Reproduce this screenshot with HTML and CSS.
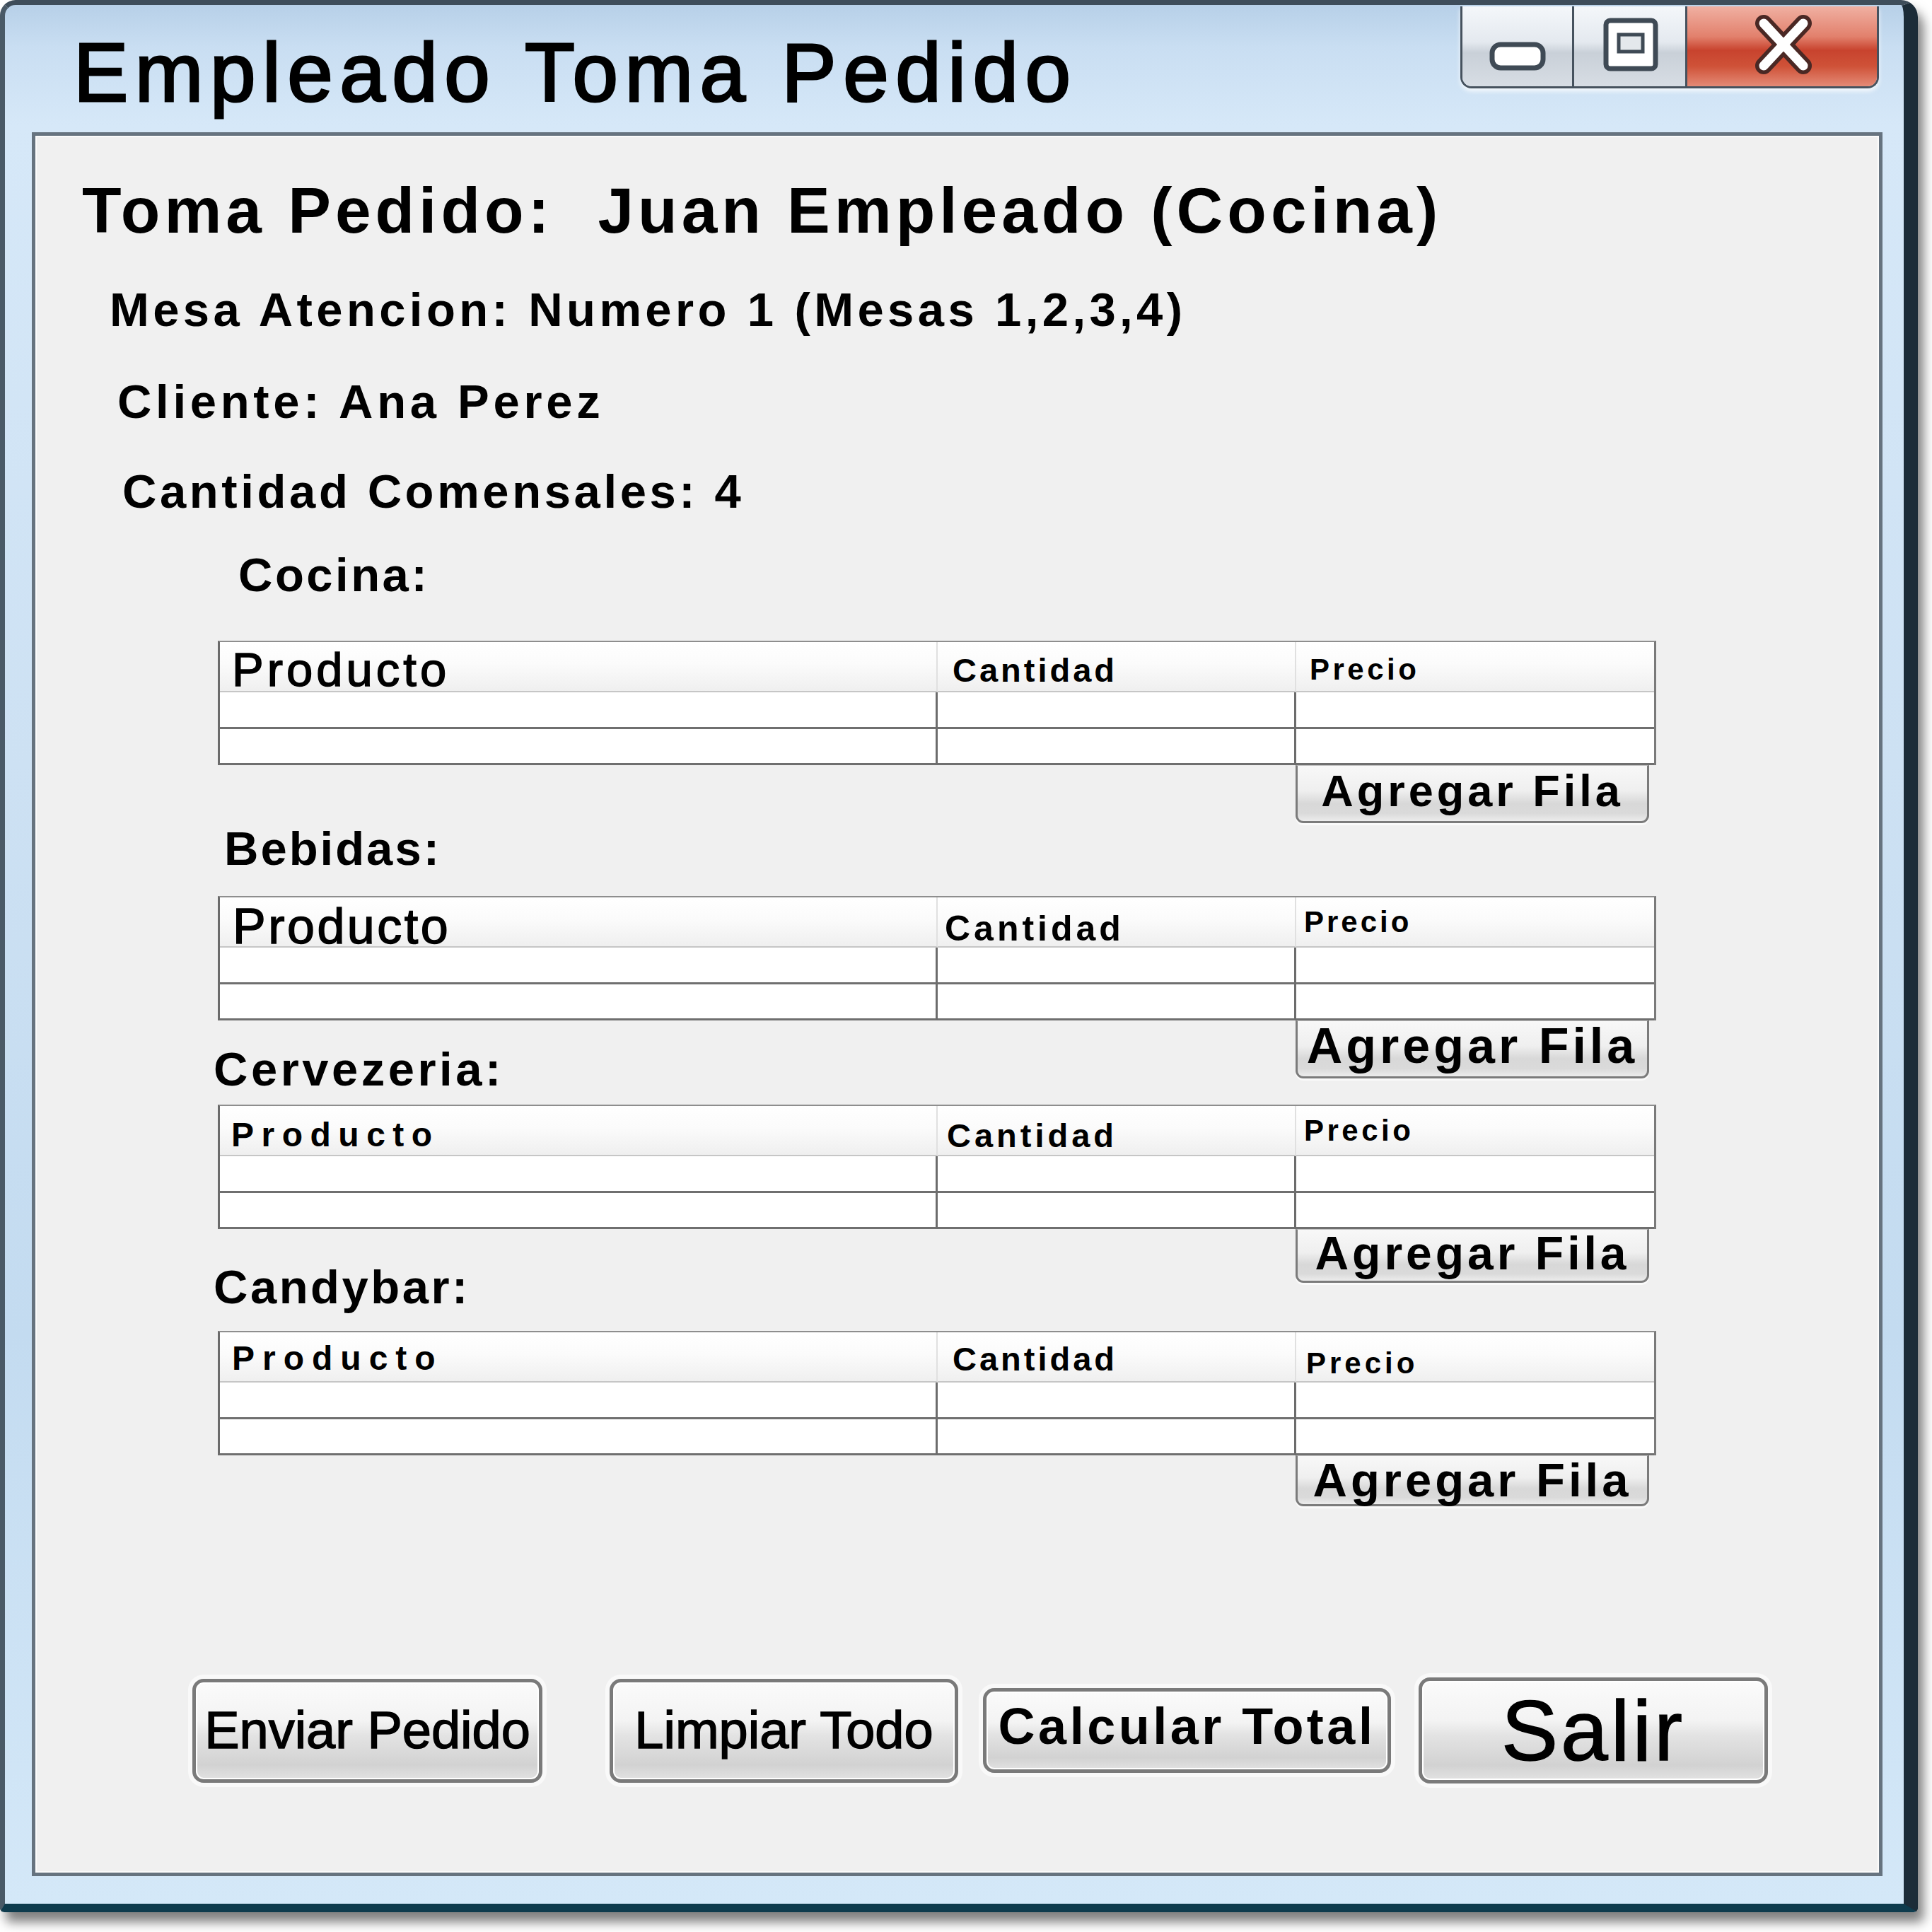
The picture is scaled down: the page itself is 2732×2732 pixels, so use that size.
FILE: index.html
```html
<!DOCTYPE html>
<html lang="es">
<head>
<meta charset="utf-8">
<title>Empleado Toma Pedido</title>
<link rel="stylesheet" href="styles.css">
</head>
<body>
<div class="window">
  <header class="titlebar">
    <div class="title">Empleado Toma Pedido</div>
    <div class="caption">
      <div class="cap cap-min">
        <svg width="155" height="113" viewBox="0 0 155 113"><rect x="42" y="54" width="72" height="33" rx="12" fill="#ffffff" stroke="#3f4a55" stroke-width="7"/></svg>
      </div>
      <div class="cap cap-max">
        <svg width="157" height="113" viewBox="0 0 157 113"><rect x="45" y="20" width="70" height="68" rx="6" fill="#ffffff" stroke="#3f4a55" stroke-width="7"/><rect x="63" y="40" width="34" height="24" fill="#e4e8ec" stroke="#3f4a55" stroke-width="5"/></svg>
      </div>
      <div class="cap cap-close">
        <svg width="268" height="113" viewBox="0 0 268 113"><path d="M108 24 L164 84 M164 24 L108 84" stroke="#4a2824" stroke-width="24" stroke-linecap="round" fill="none"/><path d="M108 24 L164 84 M164 24 L108 84" stroke="#ffffff" stroke-width="13" stroke-linecap="round" fill="none"/></svg>
      </div>
    </div>
  </header>
  <main class="client">
    <h1 class="heading">Toma Pedido:&nbsp; Juan Empleado (Cocina)</h1>
    <p class="info mesa">Mesa Atencion: Numero 1 (Mesas 1,2,3,4)</p>
    <p class="info cliente">Cliente: Ana Perez</p>
    <p class="info comensales">Cantidad Comensales: 4</p>

    <h2 class="label l-cocina">Cocina:</h2>
    <div class="grid g1">
      <div class="hc hc1"><span class="ht h1p">Producto</span></div>
      <div class="hc hc2"><span class="ht h1c">Cantidad</span></div>
      <div class="hc hc3"><span class="ht h1r">Precio</span></div>
      <div class="bc bc1"></div><div class="bc bc2"></div><div class="bc bc3"></div>
      <div class="bc bc1"></div><div class="bc bc2"></div><div class="bc bc3"></div>
    </div>
    <div class="addrow af1">Agregar Fila</div>

    <h2 class="label l-bebidas">Bebidas:</h2>
    <div class="grid g2">
      <div class="hc hc1"><span class="ht h2p">Producto</span></div>
      <div class="hc hc2"><span class="ht h2c">Cantidad</span></div>
      <div class="hc hc3"><span class="ht h2r">Precio</span></div>
      <div class="bc bc1"></div><div class="bc bc2"></div><div class="bc bc3"></div>
      <div class="bc bc1"></div><div class="bc bc2"></div><div class="bc bc3"></div>
    </div>
    <div class="addrow af2">Agregar Fila</div>

    <h2 class="label l-cerveza">Cervezeria:</h2>
    <div class="grid g3">
      <div class="hc hc1"><span class="ht h3p">Producto</span></div>
      <div class="hc hc2"><span class="ht h3c">Cantidad</span></div>
      <div class="hc hc3"><span class="ht h3r">Precio</span></div>
      <div class="bc bc1"></div><div class="bc bc2"></div><div class="bc bc3"></div>
      <div class="bc bc1"></div><div class="bc bc2"></div><div class="bc bc3"></div>
    </div>
    <div class="addrow af3">Agregar Fila</div>

    <h2 class="label l-candy">Candybar:</h2>
    <div class="grid g4">
      <div class="hc hc1"><span class="ht h4p">Producto</span></div>
      <div class="hc hc2"><span class="ht h4c">Cantidad</span></div>
      <div class="hc hc3"><span class="ht h4r">Precio</span></div>
      <div class="bc bc1"></div><div class="bc bc2"></div><div class="bc bc3"></div>
      <div class="bc bc1"></div><div class="bc bc2"></div><div class="bc bc3"></div>
    </div>
    <div class="addrow af4">Agregar Fila</div>

    <div class="actions">
      <button class="btn b-enviar">Enviar Pedido</button>
      <button class="btn b-limpiar">Limpiar Todo</button>
      <button class="btn b-calcular">Calcular Total</button>
      <button class="btn b-salir">Salir</button>
    </div>
  </main>
</div>
</body>
</html>
```
FILE: styles.css
```css
html, body {
  margin: 0;
  padding: 0;
  background: #ffffff;
}
body {
  font-family: "Liberation Sans", Arial, sans-serif;
  color: #000;
  width: 2732px;
  height: 2732px;
  overflow: hidden;
}

.window {
  width: 2712px;
  height: 2704px;
  box-sizing: border-box;
  border-style: solid;
  border-width: 7px 20px 12px 7px;
  border-color: #3e4d5a #1c2c38 #0e3b4d #4a5a67;
  border-radius: 22px 24px 6px 6px;
  background: linear-gradient(180deg, #b7d0e8 0, #c9def2 60px, #d6e8f8 170px, #cde1f3 40%, #c3dbf0 70%, #d4e8f8 100%);
  padding: 0 30px 39px 38px;
  display: flex;
  flex-direction: column;
  box-shadow: 8px 14px 16px rgba(0, 0, 0, 0.5);
}

.titlebar {
  height: 180px;
  flex: none;
  display: flex;
  align-items: flex-start;
}
.title {
  margin: 38px 0 0 59px;
  font-size: 116px;
  line-height: 116px;
  letter-spacing: 9.5px;
  -webkit-text-stroke: 3px #000;
  white-space: nowrap;
}

.caption {
  margin: 2px 5px 0 auto;
  width: 592px;
  height: 116px;
  box-sizing: border-box;
  border: 3px solid #46525e;
  border-top: 0;
  border-radius: 0 0 16px 16px;
  overflow: hidden;
  display: flex;
  box-shadow: 0 4px 6px rgba(255, 255, 255, 0.8);
}
.cap {
  height: 100%;
  box-sizing: border-box;
}
.cap svg {
  display: block;
}
.cap-min {
  width: 158px;
  border-right: 3px solid #46525e;
  background: linear-gradient(180deg, #f4f7fa 0, #e4e9ef 45%, #c9d0d8 58%, #d7dde4 100%);
}
.cap-max {
  width: 160px;
  border-right: 3px solid #46525e;
  background: linear-gradient(180deg, #f4f7fa 0, #e4e9ef 45%, #c9d0d8 58%, #d7dde4 100%);
}
.cap-close {
  flex: 1;
  background: linear-gradient(180deg, #f0b0a2 0, #e2806c 38%, #c8432e 55%, #cf5238 75%, #e48a76 100%);
}

.client {
  flex: 1;
  box-sizing: border-box;
  border: 5px solid #66737f;
  background: #f0f0f0;
  box-shadow: inset 0 0 0 2px #fbfbfb;
  display: flex;
  flex-direction: column;
  align-items: flex-start;
}

.heading {
  margin: 56px 0 0 66px;
  font-size: 91px;
  line-height: 100px;
  font-weight: 700;
  letter-spacing: 6px;
  white-space: nowrap;
}
.info {
  margin: 0;
  font-size: 67px;
  line-height: 80px;
  font-weight: 700;
  white-space: nowrap;
}
.mesa { margin-top: 50px; margin-left: 105px; letter-spacing: 5.4px; }
.cliente { margin-top: 50px; margin-left: 116px; letter-spacing: 5.7px; }
.comensales { margin-top: 47px; margin-left: 123px; letter-spacing: 4.6px; }

.label {
  margin: 0;
  font-size: 67px;
  line-height: 70px;
  font-weight: 700;
  white-space: nowrap;
}
.l-cocina { margin-top: 43px; margin-left: 287px; letter-spacing: 3.5px; }
.l-bebidas { margin-top: 1px; margin-left: 267px; letter-spacing: 3px; }
.l-cerveza { margin-top: -48px; margin-left: 252px; letter-spacing: 4.5px; }
.l-candy { margin-top: -29px; margin-left: 252px; letter-spacing: 3.5px; }

.grid {
  margin-left: 258px;
  width: 2034px;
  box-sizing: border-box;
  display: grid;
  grid-template-columns: 1015px 507px 1fr;
  grid-template-rows: 71px 52px 51px;
  background: #ffffff;
  border-top: 2px solid #8e8e8e;
  border-left: 3px solid #6b6b6b;
  border-right: 3px solid #7a7a7a;
}
.g1 { margin-top: 58px; }
.g2 { margin-top: 32px; }
.g3 { margin-top: 15px; }
.g4 { margin-top: 27px; }

.hc {
  box-sizing: border-box;
  background: linear-gradient(180deg, #ffffff 0, #fbfbfb 45%, #efefef 100%);
  border-bottom: 2px solid #c6c6c6;
  white-space: nowrap;
}
.hc1, .hc2 { border-right: 2px solid #e0e0e0; }
.bc {
  box-sizing: border-box;
  border-bottom: 3px solid #6f6f6f;
}
.bc1, .bc2 { border-right: 3px solid #6c6c6c; }

.ht {
  display: block;
  line-height: 1;
}
.h1p { font-size: 67px; padding: 5px 0 0 17px; letter-spacing: 5px; -webkit-text-stroke: 1.5px #000; }
.h1c { font-size: 47px; font-weight: 700; padding: 16px 0 0 21px; letter-spacing: 4px; }
.h1r { font-size: 42px; font-weight: 700; padding: 18px 0 0 19px; letter-spacing: 4.5px; }
.h2p { font-size: 70px; padding: 6px 0 0 18px; letter-spacing: 3.5px; -webkit-text-stroke: 1.5px #000; }
.h2c { font-size: 50px; font-weight: 700; padding: 19px 0 0 10px; letter-spacing: 5px; }
.h2r { font-size: 42px; font-weight: 700; padding: 14px 0 0 11px; letter-spacing: 4px; }
.h3p { font-size: 48px; font-weight: 700; padding: 17px 0 0 16px; letter-spacing: 10.5px; }
.h3c { font-size: 47px; font-weight: 700; padding: 18px 0 0 13px; letter-spacing: 5px; }
.h3r { font-size: 42px; font-weight: 700; padding: 14px 0 0 11px; letter-spacing: 4.5px; }
.h4p { font-size: 48px; font-weight: 700; padding: 13px 0 0 17px; letter-spacing: 11px; }
.h4c { font-size: 47px; font-weight: 700; padding: 14px 0 0 21px; letter-spacing: 4px; }
.h4r { font-size: 42px; font-weight: 700; padding: 23px 0 0 14px; letter-spacing: 5px; }

.addrow {
  margin-left: 1782px;
  width: 500px;
  box-sizing: border-box;
  border: 3px solid #7b7b7b;
  border-top: 1px solid #c4c4c4;
  border-radius: 0 0 11px 11px;
  background: linear-gradient(180deg, #f8f8f8 0, #efefef 45%, #d8d8d8 68%, #dadada 86%, #ececec 100%);
  box-shadow: 0 3px 0 #fafafa;
  font-weight: 700;
  text-align: center;
  line-height: 1;
  white-space: nowrap;
  letter-spacing: 5px;
}
.af1 { height: 82px; font-size: 63px; padding-top: 4px; }
.af2 { height: 82px; font-size: 70px; }
.af3 { height: 76px; font-size: 66px; }
.af4 { height: 72px; font-size: 67px; }

.actions {
  margin-top: 242px;
  margin-left: 222px;
  display: flex;
  align-items: center;
}
.btn {
  box-sizing: border-box;
  margin: 0;
  padding: 0;
  border: 5px solid #7a7a7a;
  border-radius: 16px;
  background: linear-gradient(180deg, #fbfbfb 0, #f3f3f3 40%, #e3e3e3 55%, #d2d2d2 85%, #e2e2e2 100%);
  box-shadow: inset 0 0 0 2px #ffffff, 0 0 0 6px #f9f9f9;
  display: flex;
  align-items: center;
  justify-content: center;
  font-family: "Liberation Sans", Arial, sans-serif;
  color: #000;
  line-height: 1;
  white-space: nowrap;
}
.b-enviar { width: 495px; height: 147px; font-size: 74px; -webkit-text-stroke: 1.5px #000; }
.b-limpiar { width: 493px; height: 147px; margin-left: 95px; font-size: 74px; -webkit-text-stroke: 1.5px #000; }
.b-calcular { width: 577px; height: 120px; margin-left: 35px; font-size: 72px; font-weight: 700; letter-spacing: 4.5px; padding-bottom: 12px; }
.b-salir { width: 494px; height: 150px; margin-left: 39px; font-size: 120px; letter-spacing: 4px; -webkit-text-stroke: 1.5px #000; }
```
